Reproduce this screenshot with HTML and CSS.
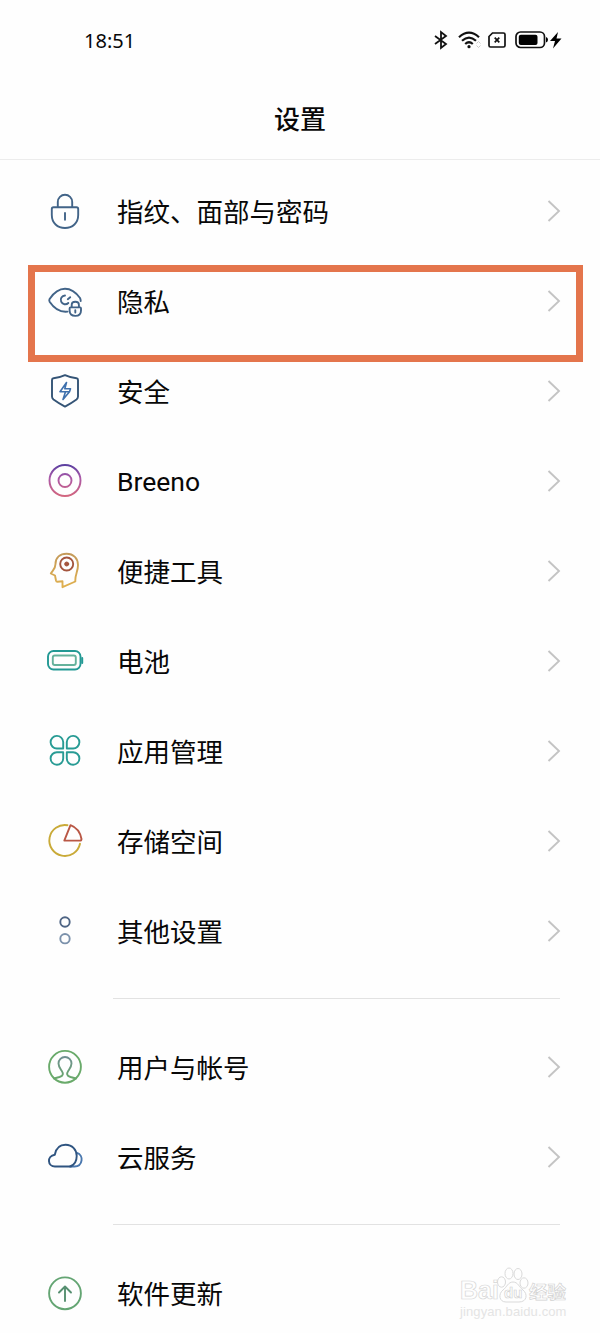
FILE: index.html
```html
<!DOCTYPE html>
<html lang="zh-CN">
<head>
<meta charset="utf-8">
<title>设置</title>
<link rel="stylesheet" href="styles.css">
</head>
<body>
<svg class="defs" width="0" height="0">
  <defs>
    <linearGradient id="ring" gradientUnits="userSpaceOnUse" x1="0" y1="4" x2="0" y2="35"><stop offset="0" stop-color="#5b3fa0"/><stop offset=".4" stop-color="#a958a8"/><stop offset="1" stop-color="#d2667f"/></linearGradient>
    <linearGradient id="gold" x1="0" y1="0" x2="0" y2="1"><stop offset="0" stop-color="#c49a5a"/><stop offset="1" stop-color="#e0b04e"/></linearGradient>
    <linearGradient id="account" x1="0" y1="0" x2="0" y2="1"><stop offset="0" stop-color="#6f8f91"/><stop offset="1" stop-color="#69a86b"/></linearGradient>
    <symbol id="chevron" viewBox="0 0 14 24"><path d="M1.5 2 12 12 1.5 22"/></symbol>
  </defs>
</svg>
<div class="screen">
  <header class="status">
    <span class="time">18:51</span>
    <div class="indicators">
      <svg width="14" height="18" viewBox="0 0 14 18" fill="none" stroke="#111" stroke-width="1.8"><path d="M1 5 12 13 7 17V1L12 5 1 13"/></svg>
      <svg class="wifi" width="24" height="18" viewBox="0 0 24 18" fill="none" stroke="#111" stroke-width="2.2"><path d="M1 6.200Q11-2.800 21 6.200M4 9.800Q11 3.300 18 9.800M7.200 13Q11 9.500 14.800 13"/><circle cx="11" cy="15.700" r="1.600" fill="#111" stroke="none"/><path d="M18.500 12.500 20.500 10.500 22.500 12.500M18.500 14.500 20.500 16.500 22.500 14.500" stroke="#ccc" stroke-width="1"/></svg>
      <svg class="sim" width="18" height="16" viewBox="0 0 18 16" fill="none" stroke="#111" stroke-width="1.700"><path d="M4.500 1H15.500Q17 1 17 2.500V13.500Q17 15 15.500 15H2.500Q1 15 1 13.500V4.500Z"/><path d="m6.700 5.700 4.600 4.600m0-4.600-4.600 4.600"/></svg>
      <svg class="power" width="47" height="18" viewBox="0 0 47 18"><rect x="1" y="1" width="28.500" height="15.500" rx="4.500" fill="none" stroke="#111" stroke-width="1.700"/><rect x="3.800" y="3.700" width="18.700" height="10.200" rx="2"/><path d="M31 6q2 .5 2 2.800T31 11.600ZM43 1 35 10H40L38 17.500 46.500 7.500H41.500Z"/></svg>
    </div>
  </header>
  <h1 class="title">设置</h1>
  <main class="list">
    <section class="group">
      <div class="row">
        <svg class="icon navy" viewBox="0 0 40 40"><path d="M12.800 16V11A7.200 7.200 0 0 1 27.200 11V16M8.500 16.200H31.500Q33.200 16.200 33.200 18V24C33.200 32 27.500 37 20 37S6.800 32 6.800 24V18Q6.800 16.200 8.500 16.200ZM20 22V28.800"/></svg>
        <span class="label">指纹、面部与密码</span><svg class="go"><use href="#chevron"/></svg>
      </div>
      <div class="row marked">
        <svg class="icon navy" viewBox="0 0 40 40"><path d="M22.500 30.600C14.500 31.500 8.500 26.500 4.600 20.700Q3.900 19.300 4.600 18C9 11.500 14 7.800 20 7.800S31 11.500 35 17Q35.700 18.500 35.700 20M20 14.500A4.400 4.400 0 1 0 23.300 22M25.200 16.200 22.800 18.200M26.700 26V24Q26.700 20.800 30.300 20.800T33.900 24V26M25.500 26.400H35.100Q36 26.400 36 27.400V29.500Q36 34.900 30.300 34.900T24.600 29.500V27.400Q24.600 26.400 25.500 26.400ZM30.300 29.300V31.500"/></svg>
        <span class="label">隐私</span><svg class="go"><use href="#chevron"/></svg>
      </div>
      <div class="row">
        <svg class="icon" viewBox="0 0 40 40" stroke="#345476"><path d="M20 4.200Q26 7 31.500 7.200Q33 7.300 33 9V25.500Q33 27.200 31.500 28.500Q26 32.500 20 35.600Q14 32.500 8.500 28.500Q7 27.200 7 25.500V9Q7 7.300 8.500 7.200Q14 7 20 4.200Z"/><path d="M21.500 11.500 15 20.800H24.500L18 28.500M21.500 11.500 19.800 17.800H25.500L24.500 20.800M15 20.800H20.500L18 28.500" stroke="#3e70ad" stroke-width="1.600"/></svg>
        <span class="label">安全</span><svg class="go"><use href="#chevron"/></svg>
      </div>
      <div class="row">
        <svg class="icon" viewBox="0 0 40 40" stroke="url(#ring)"><circle cx="20" cy="19.500" r="15.500"/><circle cx="20" cy="19.500" r="6.500"/></svg>
        <span class="label latin">Breeno</span><svg class="go"><use href="#chevron"/></svg>
      </div>
      <div class="row">
        <svg class="icon" viewBox="0 0 40 40"><path stroke="url(#gold)" d="M10.500 13C10.500 6.500 15 2.700 21.500 2.700C28.500 2.700 33 7.500 33 14C33 20.500 30.300 22.500 30.300 29.500V30.500L17.500 36.200V30.200L12.500 30.700Q11.300 30.800 11 29.500L10 24.500L5.800 22.500C8.500 18.500 10.500 17.500 10.500 13Z"/><g stroke="#a4553e"><circle cx="21.700" cy="13" r="6.500"/><circle cx="21.700" cy="13" r="2" fill="#a4553e" stroke-width="1"/></g></svg>
        <span class="label">便捷工具</span><svg class="go"><use href="#chevron"/></svg>
      </div>
      <div class="row">
        <svg class="icon" viewBox="0 0 40 40" stroke="#239994"><rect x="3" y="10" width="32.500" height="18.500" rx="5.500"/><rect x="7.800" y="14.500" width="23" height="9.500" rx="2" stroke="#65b29c"/><path d="M37.200 17V22" stroke-width="2"/></svg>
        <span class="label">电池</span><svg class="go"><use href="#chevron"/></svg>
      </div>
      <div class="row">
        <svg class="icon" viewBox="0 0 40 40" stroke="#289b94"><path d="M18.200 17.500V11A6.300 6.300 0 1 0 12 17.500ZM21.800 17.500V11A6.300 6.300 0 1 1 28 17.500ZM18.200 21.200V27.500A6.300 6.300 0 1 1 12 21.200ZM21.800 21.200V27.500A6.300 6.300 0 1 0 28 21.200Z"/></svg>
        <span class="label">应用管理</span><svg class="go"><use href="#chevron"/></svg>
      </div>
      <div class="row">
        <svg class="icon" viewBox="0 0 40 40"><path stroke="#c9aa38" d="M22.500 4.200A15.500 15.500 0 1 0 35 22.700"/><path stroke="#b95745" d="M25.500 4.200Q34.500 7.500 36.500 18Q36.500 19.600 35 19.600H19.300Z"/></svg>
        <span class="label">存储空间</span><svg class="go"><use href="#chevron"/></svg>
      </div>
      <div class="row">
        <svg class="icon" viewBox="0 0 40 40"><circle cx="20" cy="11" r="4.700" stroke="#4e6484"/><circle cx="20" cy="27.700" r="4.700" stroke="#7b91ab"/></svg>
        <span class="label">其他设置</span><svg class="go"><use href="#chevron"/></svg>
      </div>
    </section>
    <section class="group">
      <div class="row">
        <svg class="icon" viewBox="0 0 40 40"><circle cx="20" cy="19.800" r="15.900" stroke="#69aa6a"/><path stroke="url(#account)" d="M9 31.500 14.500 30C18.500 28.800 18.500 26.500 16.800 24C14.800 21 13.500 19.500 13.500 16.500A6.500 6.500 0 0 1 26.500 16.500C26.500 19.500 25.200 21 23.200 24C21.500 26.500 21.500 28.800 25.500 30L31 31.500"/></svg>
        <span class="label">用户与帐号</span><svg class="go"><use href="#chevron"/></svg>
      </div>
      <div class="row">
        <svg class="icon" viewBox="0 0 40 40"><path stroke="#4977ae" d="M32 15.800C39 18 38 29.500 29.500 29.500H25"/><path stroke="#2f5480" d="M26 29.500H10C2.500 29.500 1.500 19 9.800 17.700C11 11.500 15 7.800 20.500 7.800C27.500 7.800 31.700 13 31.700 19C31.700 25 29.500 28 25 29.500"/></svg>
        <span class="label">云服务</span><svg class="go"><use href="#chevron"/></svg>
      </div>
    </section>
    <section class="group">
      <div class="row">
        <svg class="icon" viewBox="0 0 40 40" stroke="#64a573"><circle cx="20" cy="20.300" r="15.900"/><path d="M20 28V13.500M14 19.500 20 13.500 26 19.500" stroke="#568f70"/></svg>
        <span class="label">软件更新</span>
      </div>
    </section>
  </main>
  <div class="watermark">
    <div class="brand"><span class="bai">Bai</span><span class="paw"><svg viewBox="0 0 32 36" width="32" height="36"><ellipse cx="4.500" cy="15" rx="4" ry="5.200"/><ellipse cx="12" cy="6.500" rx="4" ry="5.500"/><ellipse cx="21" cy="7" rx="4" ry="5.500"/><ellipse cx="27" cy="16" rx="4" ry="5.200"/><path d="M16 15C11 15 10 20 6 23C1 27 2 35 9 35H22C30 35 31 27 26 23C22 20 21 15 16 15Z"/></svg><span class="du">du</span></span><span class="exp">经验</span></div>
    <div class="site">jingyan.baidu.com</div>
  </div>
</div>
</body>
</html>
```
FILE: styles.css
```css
*, *::before, *::after { box-sizing: border-box; }
html, body { margin: 0; overflow: hidden; }
body { background: #fefefe; color: #080808; font-family: Roboto, "Noto Sans CJK SC", sans-serif; }
svg { display: block; flex: none; overflow: visible; }
.defs { position: absolute; }
.screen { position: relative; width: 600px; height: 1333px; overflow: hidden; }
.status { display: flex; align-items: center; justify-content: space-between; height: 80px; padding: 0 38px 0 84px; }
.time { padding-top: 1px; font: 20px/24px "Noto Sans", sans-serif; }
.indicators { display: flex; align-items: center; }
.wifi { margin-left: 10px; }
.sim { margin-left: 6px; }
.power { margin-left: 9px; }
.title { margin: 0; height: 80px; padding-top: 1px; border-bottom: 1px solid #ececec; font-size: 26px; line-height: 78px; font-weight: 500; text-align: center; }
.list { padding: 6px 40px 0 45px; }
.group + .group::before { content: ""; display: block; height: 1px; margin: 22px 0 23px 68px; background: #e2e2e2; }
.row { position: relative; display: flex; align-items: center; height: 90px; }
.icon { width: 40px; height: 40px; fill: none; stroke-width: 1.9; stroke-linecap: round; stroke-linejoin: round; }
.navy { stroke: #426488; }
.label { flex: 1; margin-left: 32px; padding-top: 3px; font-size: 26.5px; line-height: 40px; white-space: nowrap; }
.latin { padding-top: 1px; }
.go { width: 14px; height: 24px; margin-right: -1px; fill: none; stroke: #c4c4c4; stroke-width: 1.9; }
.marked::after { content: ""; position: absolute; left: -17px; top: 9px; width: 555px; height: 97px; border: 7px solid #e4754c; }
.watermark { position: absolute; left: 460px; top: 1267px; width: 108px; font-family: "Liberation Sans", "Noto Sans CJK SC", sans-serif; }
.brand { display: flex; align-items: flex-end; height: 36px; color: #fefefe; font-weight: bold; }
.bai { width: 37px; font-size: 25px; line-height: 26px; -webkit-text-stroke: .7px #d6d6d6; }
.paw { position: relative; fill: #fefefe; stroke: #dadada; stroke-width: 1; }
.du { position: absolute; left: 7px; top: 18px; font-size: 15px; line-height: 16px; -webkit-text-stroke: .6px #d0d0d0; }
.exp { font-size: 18.5px; line-height: 20px; -webkit-text-stroke: .7px #d2d2d2; }
.site { padding-top: 1px; font-size: 13px; line-height: 15px; letter-spacing: .1px; color: #e4e4e4; white-space: nowrap; }
```
